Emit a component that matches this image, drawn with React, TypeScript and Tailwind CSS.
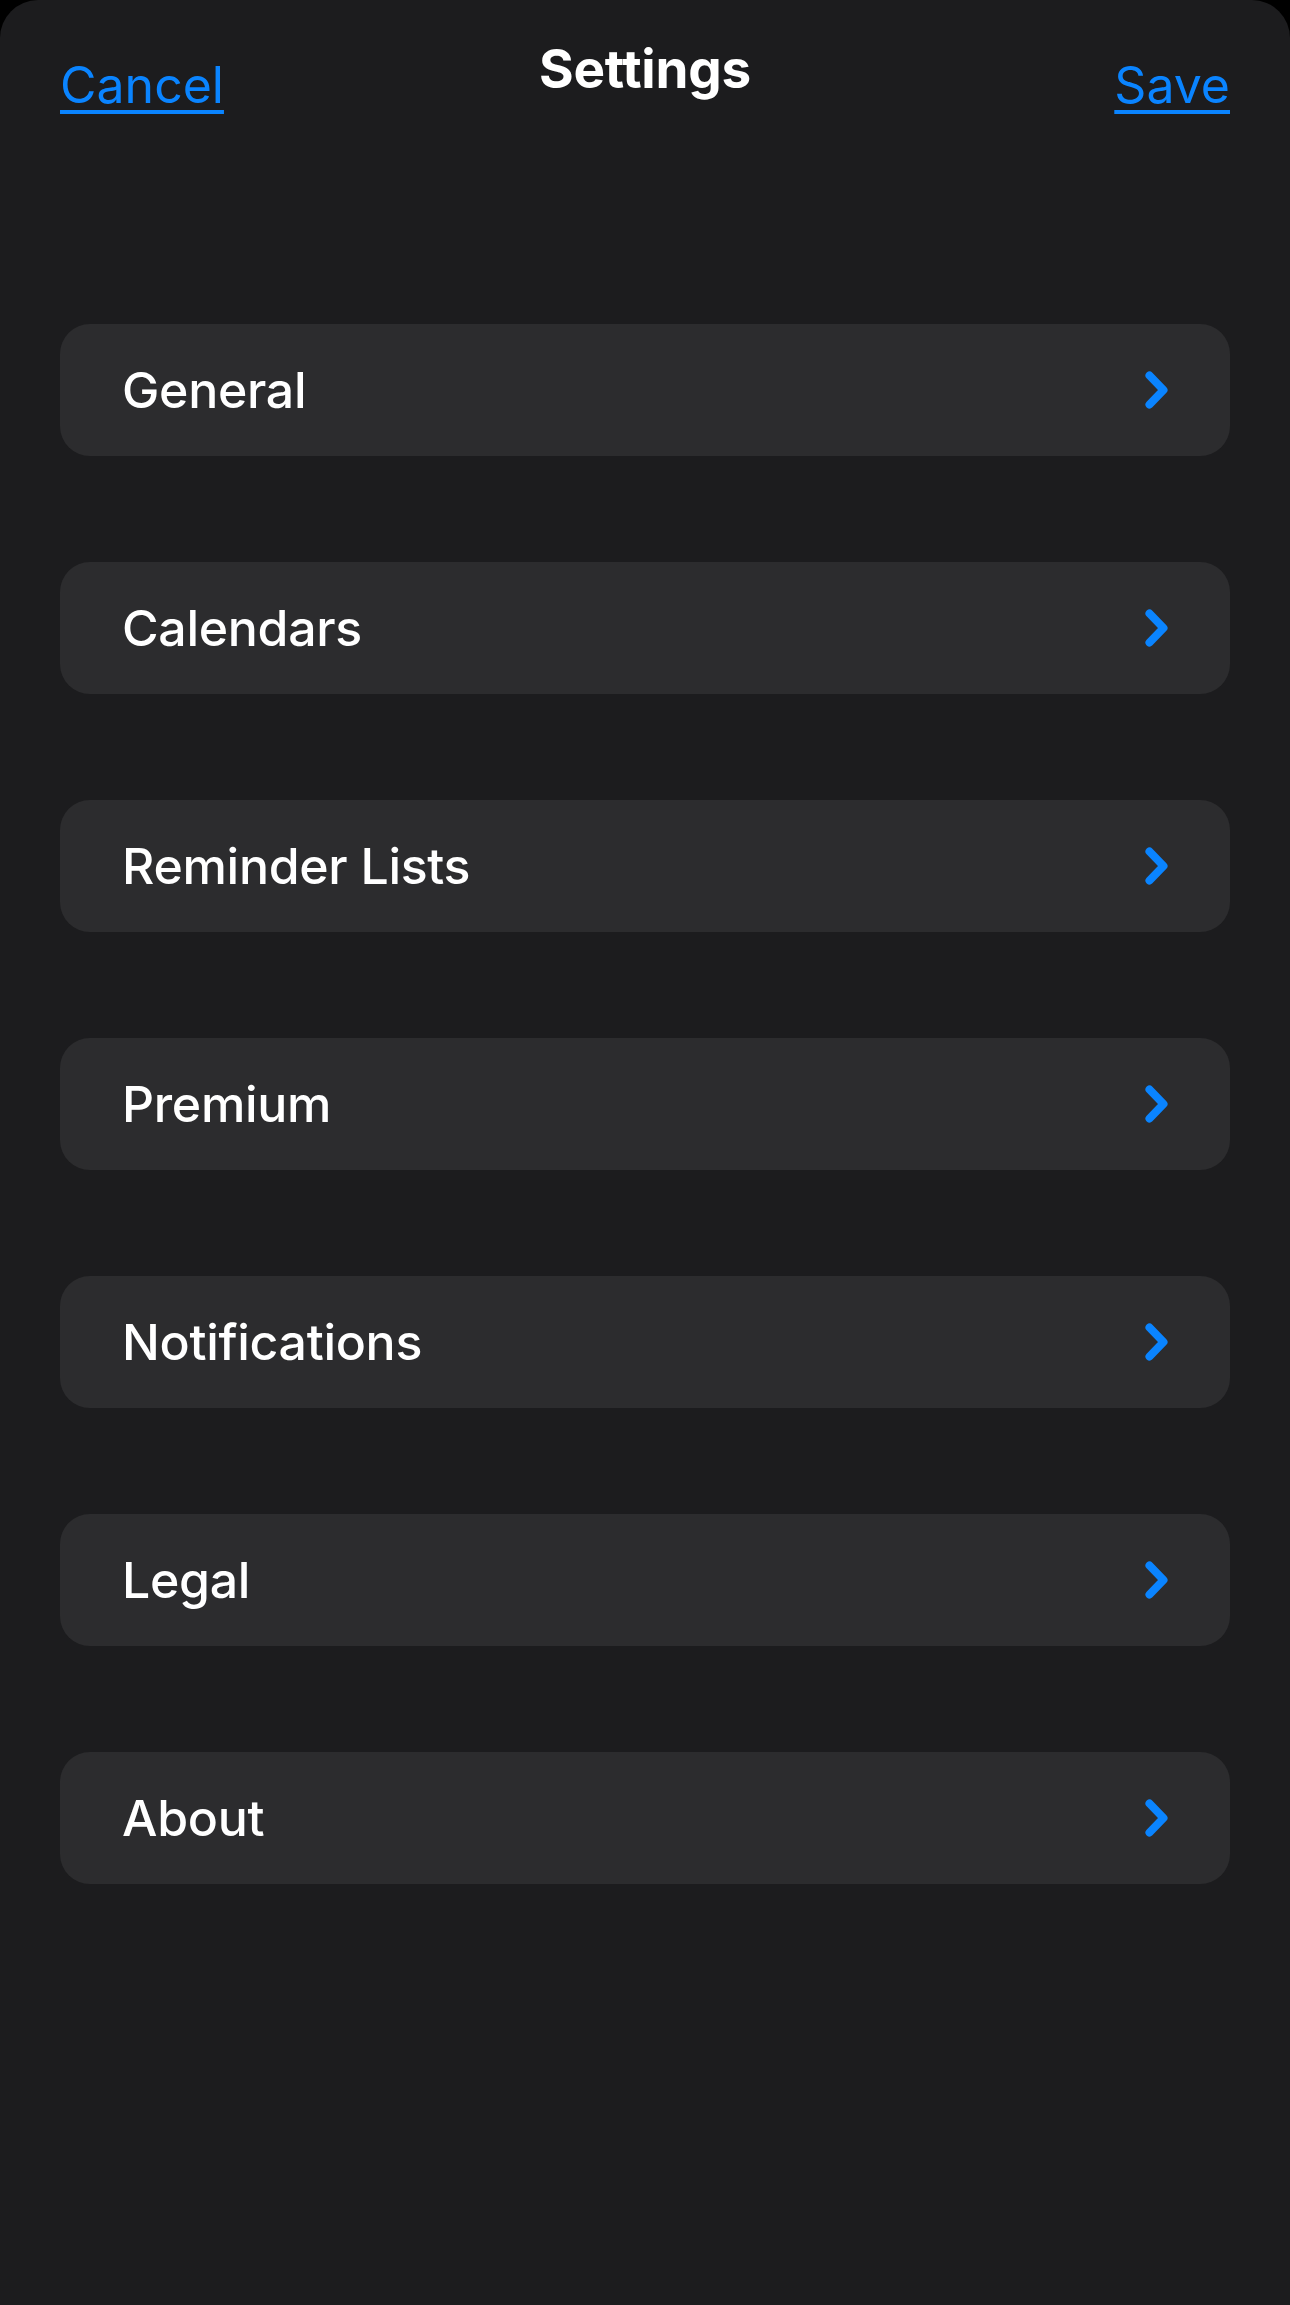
const items = [
  "General",
  "Calendars",
  "Reminder Lists",
  "Premium",
  "Notifications",
  "Legal",
  "About",
];

function Chevron() {
  return (
    <svg width="24" height="38" viewBox="0 0 24 38" fill="none">
      <path
        d="M4.5 4.5 L18.5 19 L4.5 33.5"
        stroke="#0A84FF"
        strokeWidth="8"
        strokeLinecap="round"
        strokeLinejoin="round"
      />
    </svg>
  );
}

export default function App() {
  return (
    <div className="bg-black w-full">
      <div
        className="h-[2305px] w-full rounded-t-[38px] bg-[#1c1c1e] text-white"
        style={{ fontFamily: "Inter, 'Noto Sans', sans-serif" }}
      >
        {/* Nav bar */}
        <header className="grid grid-cols-[1fr_auto_1fr] items-start px-[60px]">
          <button className="mt-[60px] justify-self-start text-[50px] leading-[50px] text-[#0a84ff] underline decoration-[4px] underline-offset-[7px]">
            Cancel
          </button>
          <h1 className="mt-[43px] text-[53px] leading-[53px] font-bold tracking-[-0.2px]">
            Settings
          </h1>
          <button className="mt-[60px] justify-self-end text-[50px] leading-[50px] text-[#0a84ff] underline decoration-[4px] underline-offset-[7px]">
            Save
          </button>
        </header>

        {/* Rows */}
        <div className="mt-[214px] flex flex-col gap-[106px] px-[60px]">
          {items.map((label) => (
            <div
              key={label}
              className="flex h-[132px] items-center justify-between rounded-[30px] bg-[#2c2c2e] pl-[62px] pr-[61px]"
            >
              <span className="text-[50px] leading-none font-medium tracking-[-0.3px]">
                {label}
              </span>
              <Chevron />
            </div>
          ))}
        </div>
      </div>
    </div>
  );
}
